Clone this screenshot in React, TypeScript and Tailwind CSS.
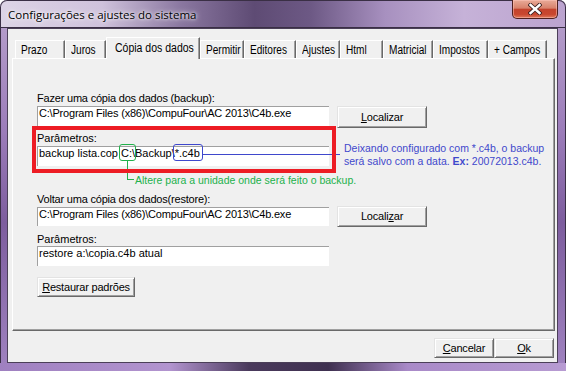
import React from 'react';

const tabs = [
  { label: 'Prazo', w: 50 },
  { label: 'Juros', w: 41 },
  { label: 'Cópia dos dados', w: 94, sel: true },
  { label: 'Permitir', w: 44 },
  { label: 'Editores', w: 52 },
  { label: 'Ajustes', w: 44 },
  { label: 'Html', w: 43 },
  { label: 'Matricial', w: 50 },
  { label: 'Impostos', w: 55 },
  { label: '+ Campos', w: 59 },
];

function Btn({ children, className = '' }: { children: React.ReactNode; className?: string }) {
  return (
    <div
      className={
        'flex items-center justify-center bg-[#f0f0f0] border border-t-[#e3e3e3] border-l-[#e3e3e3] border-r-[#696969] border-b-[#696969] shadow-[inset_1px_1px_0_#ffffff,inset_-1px_-1px_0_#a0a0a0] text-[11px] leading-[13px] tracking-[-0.2px] ' +
        className
      }
    >
      {children}
    </div>
  );
}

function Field({ children, className = '' }: { children?: React.ReactNode; className?: string }) {
  return (
    <div
      className={
        'w-[292px] bg-white border-t border-l border-t-[#a0a0a0] border-l-[#a0a0a0] pl-[1px] text-[11px] leading-[13px] whitespace-nowrap ' +
        className
      }
    >
      {children}
    </div>
  );
}

export default function App() {
  return (
    <div className="relative w-[566px] h-[371px] overflow-hidden rounded-t-[7px] bg-[linear-gradient(180deg,#b9a3cd_0%,#9c7dba_35%,#7d5d9e_60%,#a083c0_100%)] shadow-[inset_0_0_0_1px_#3a2f45] flex flex-col font-['Liberation_Sans',Arial,sans-serif] text-black">
      {/* title bar */}
      <div className="relative h-[28px] shrink-0 rounded-t-[7px] bg-[linear-gradient(90deg,#ddd4e6_0%,#cfc2dc_18%,#8a77a0_32%,#5e4b74_45%,#6d5985_55%,#a790bf_68%,#c6b2d8_82%,#bba3cf_100%)] shadow-[inset_0_0_0_1px_#3a2f45]">
        <div className="pl-[8px] pt-[7px] text-[11.5px] leading-[16px] font-['Open_Sans',sans-serif] text-black [text-shadow:0_0_6px_#ffffff,0_0_3px_#ffffff]">
          Configurações e ajustes do sistema
        </div>
        <div className="absolute right-[8px] top-0 w-[46px] h-[19px] rounded-b-[5px] border border-t-0 border-[#4e2020] bg-[linear-gradient(180deg,#e9ab98_0%,#d8826c_45%,#c4432d_52%,#c9472f_80%,#de7a5c_100%)] shadow-[inset_0_0_0_1px_rgba(255,200,190,0.5)] flex items-center justify-center">
          <svg width="14" height="12" viewBox="0 0 14 12">
            <path d="M2.5 2 L11.5 10 M11.5 2 L2.5 10" stroke="#3b2020" strokeWidth="4.2" strokeLinecap="square" />
            <path d="M2.5 2 L11.5 10 M11.5 2 L2.5 10" stroke="#ffffff" strokeWidth="2.4" strokeLinecap="square" />
          </svg>
        </div>
      </div>

      {/* client area */}
      <div className="ml-[7px] w-[551px] h-[335px] shrink-0 border border-[#4b3f58] bg-[#f0f0f0] flex flex-col">
        {/* tab row */}
        <div className="flex items-end pl-[7px] h-[29px] shrink-0">
          {tabs.map((t) =>
            t.sel ? (
              <div
                key={t.label}
                style={{ width: t.w }}
                className="relative z-10 -mb-[1px] h-[22px] bg-[#f0f0f0] border-t border-l border-r border-t-white border-l-white border-r-[#696969] shadow-[inset_-1px_0_0_#a0a0a0] pl-[8px] pt-[3px] text-[12.5px] leading-[15px] whitespace-nowrap"
              >
                <span className="inline-block origin-left scale-x-[0.84]">{t.label}</span>
              </div>
            ) : (
              <div
                key={t.label}
                style={{ width: t.w }}
                className="h-[18px] bg-[#f0f0f0] border-t border-l border-r border-t-white border-l-white border-r-[#696969] shadow-[inset_-1px_0_0_#a0a0a0] pl-[5px] pt-[2px] text-[12px] leading-[15px] whitespace-nowrap"
              >
                <span className="inline-block origin-left scale-x-[0.84]">{t.label}</span>
              </div>
            )
          )}
        </div>

        {/* tab page */}
        <div className="relative ml-[4px] w-[543px] h-[273px] shrink-0 border border-t-white border-l-white border-r-[#696969] border-b-[#696969] shadow-[inset_-1px_-1px_0_#a0a0a0] pl-[24px] pt-[33px] text-[11px] leading-[13px]">
          <div className="h-[13px] tracking-[-0.2px]">Fazer uma cópia dos dados (backup):</div>
          <div className="mt-[1px] flex items-start">
            <Field className="h-[21px] tracking-[-0.2px]">C:\Program Files (x86)\CompuFour\AC 2013\C4b.exe</Field>
            <Btn className="ml-[8px] w-[90px] h-[22px]">
              <span>
                <u className="underline-offset-[1px]">L</u>ocalizar
              </span>
            </Btn>
          </div>

          <div className="mt-[4px] h-[13px]">Parâmetros:</div>
          <Field className="mt-[1px] h-[20px] relative">
            backup lista.cop{' '}
            <span className="relative">
              C:\
              <span className="absolute left-[-2px] right-[-1px] top-[-3px] h-[17px] rounded-[3px] border border-[#22b14c]" />
              <span className="absolute left-[6px] top-[14px] h-[19px] w-px bg-[#22b14c]" />
              <span className="absolute left-[6px] top-[32px] h-px w-[7px] bg-[#22b14c]" />
              <span className="absolute left-[14px] top-[27px] whitespace-nowrap text-[#22b14c] text-[10.5px]">
                Altere para a unidade onde será feito o backup.
              </span>
            </span>
            Backup\
            <span className="relative">
              *.c4b
              <span className="absolute left-[-2px] right-[-3px] top-[-3px] h-[17px] rounded-[3px] border border-[#3f48cc]" />
              <span className="absolute left-[calc(100%+3px)] top-[7px] h-px w-[137px] bg-[#3f48cc]" />
            </span>
          </Field>

          <div className="mt-[27px] h-[13px] tracking-[-0.2px]">Voltar uma cópia dos dados(restore):</div>
          <div className="flex items-start">
            <Field className="mt-[1px] h-[19px] tracking-[-0.2px]">C:\Program Files (x86)\CompuFour\AC 2013\C4b.exe</Field>
            <Btn className="ml-[8px] w-[90px] h-[21px]">
              <span>
                Locali<u className="underline-offset-[1px]">z</u>ar
              </span>
            </Btn>
          </div>

          <div className="mt-[6px] h-[13px]">Parâmetros:</div>
          <Field className="h-[20px]">restore a:\copia.c4b atual</Field>

          <Btn className="mt-[11px] w-[98px] h-[20px]">
            <span>
              <u className="underline-offset-[1px]">R</u>estaurar padrões
            </span>
          </Btn>

          {/* annotations */}
          <div className="absolute left-[19px] top-[67px] w-[304px] h-[47px] border-[4px] border-[#ed1c24]" />
          <div className="absolute left-[331px] top-[83px] text-[#3f48cc] text-[10.5px] leading-[13px] whitespace-nowrap">
            <div>Deixando configurado com *.c4b, o backup</div>
            <div>
              será salvo com a data. <b>Ex:</b> 20072013.c4b.
            </div>
          </div>
        </div>

        {/* bottom buttons */}
        <div className="mt-[7px] flex justify-end pr-[3px]">
          <Btn className="w-[60px] h-[20px]">
            <span>
              <u className="underline-offset-[1px]">C</u>ancelar
            </span>
          </Btn>
          <Btn className="w-[60px] h-[20px]">
            <span>
              <u className="underline-offset-[1px]">O</u>k
            </span>
          </Btn>
        </div>
      </div>

      {/* bottom frame */}
      <div className="h-[8px] shrink-0 bg-[linear-gradient(90deg,#9f80c0_0%,#b294cf_30%,#4a3a5c_44%,#3f3050_58%,#a98ac8_72%,#b79bd2_100%)]" />
    </div>
  );
}
